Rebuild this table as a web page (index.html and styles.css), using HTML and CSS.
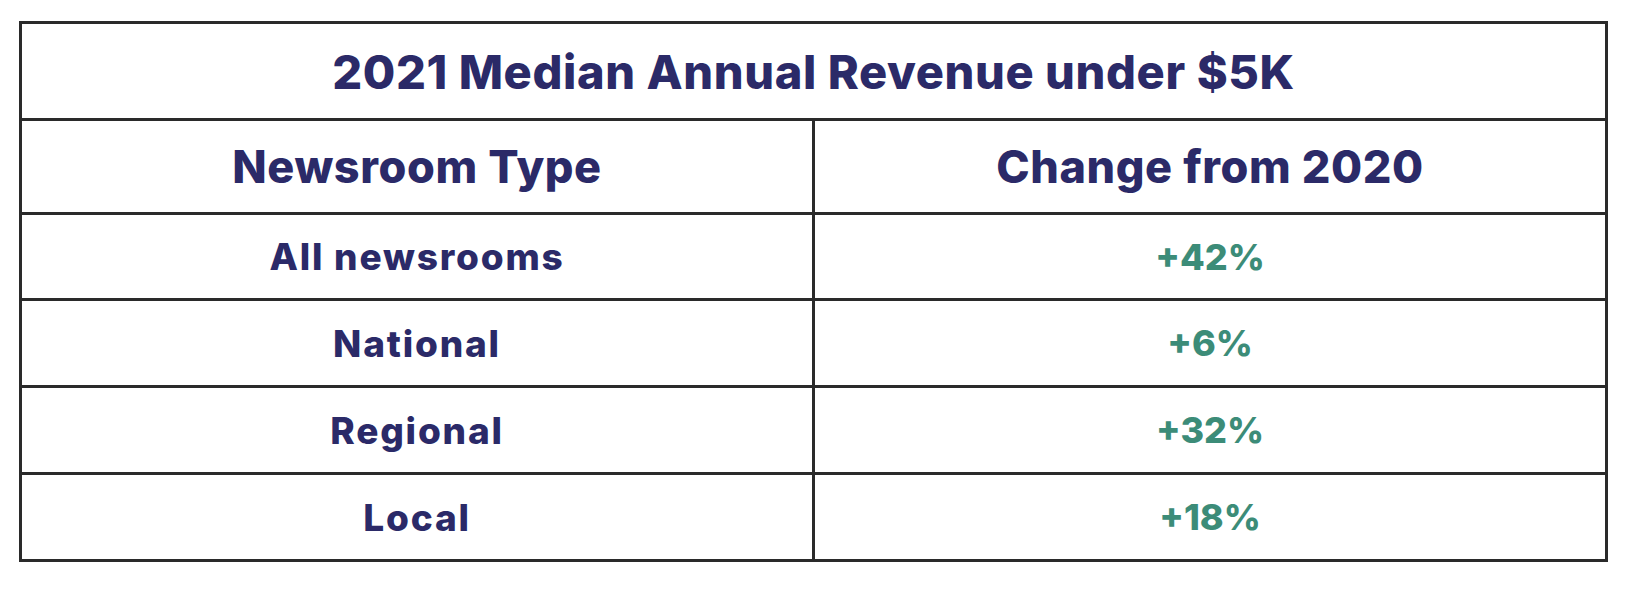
FILE: index.html
```html
<!DOCTYPE html>
<html lang="en">
<head>
<meta charset="utf-8">
<title>2021 Median Annual Revenue under $5K</title>
<link rel="stylesheet" href="styles.css">
</head>
<body>
<div class="table">
  <div class="cell title">2021 Median Annual Revenue under $5K</div>
  <div class="cell head">Newsroom Type</div>
  <div class="cell head">Change from 2020</div>
  <div class="cell label r1">All newsrooms</div>
  <div class="cell value r1">+42%</div>
  <div class="cell label">National</div>
  <div class="cell value">+6%</div>
  <div class="cell label">Regional</div>
  <div class="cell value">+32%</div>
  <div class="cell label">Local</div>
  <div class="cell value">+18%</div>
</div>
</body>
</html>
```

FILE: styles.css
```css
html, body {
  margin: 0;
  padding: 0;
  background: #ffffff;
}

body {
  font-family: Inter, "Noto Sans", "DejaVu Sans", sans-serif;
  font-weight: 800;
}

.table {
  margin: 21px 0 0 19px;
  width: 1589px;
  box-sizing: border-box;
  padding: 3px;
  background: #2a2a2a;
  display: grid;
  grid-template-columns: 790px 790px;
  grid-template-rows: 94px 91px 83px 84px 84px 84px;
  gap: 3px;
}

.cell {
  background: #ffffff;
  display: flex;
  align-items: center;
  justify-content: center;
  line-height: normal;
  color: #2b2a68;
  white-space: nowrap;
}

.title {
  grid-column: 1 / span 2;
  font-size: 47px;
  letter-spacing: 0.6px;
}

.head {
  font-size: 45px;
  letter-spacing: 0.6px;
}

.label {
  font-size: 37px;
  letter-spacing: 1.8px;
}

.value {
  font-size: 36px;
  color: #3c8c78;
}
```
